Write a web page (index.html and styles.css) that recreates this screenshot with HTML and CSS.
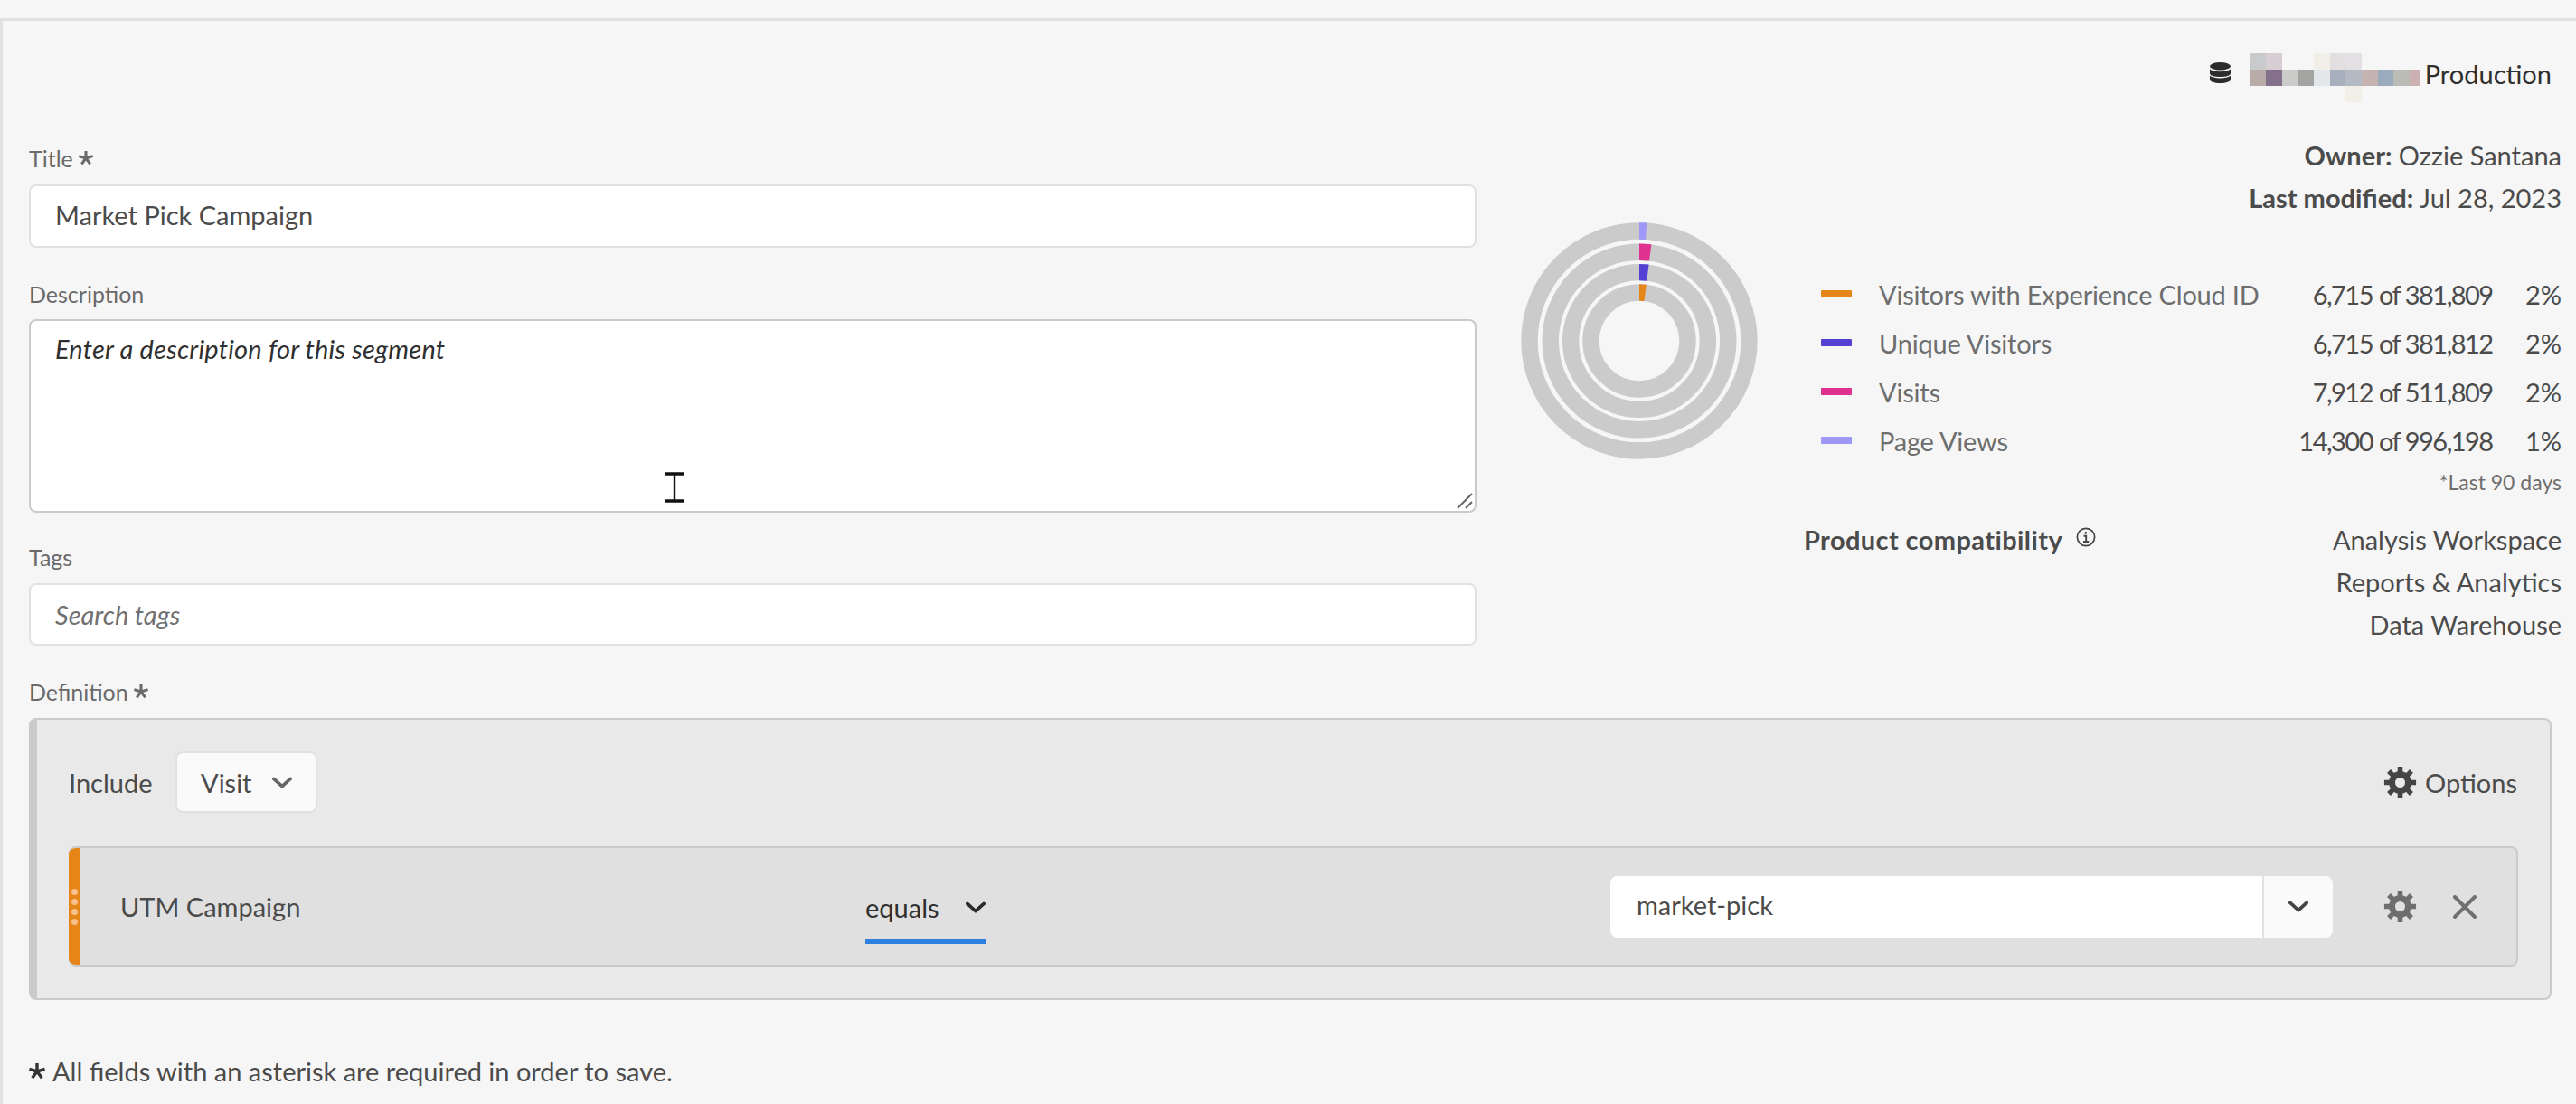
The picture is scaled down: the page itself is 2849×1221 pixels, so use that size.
FILE: index.html
```html
<!DOCTYPE html>
<html lang="en">
<head>
<meta charset="utf-8">
<title>Segment</title>
<link rel="stylesheet" href="styles.css">
</head>
<body>
<svg class="defs" width="0" height="0" aria-hidden="true">
  <symbol id="gear" viewBox="-20 -20 40 40">
    <circle r="9.7" fill="none" stroke="currentColor" stroke-width="7.4"/>
    <path fill="none" stroke="currentColor" stroke-width="6" d="M0-19V-12M0 12V19M-19 0H-12M12 0H19M-13.5-13.5L-8.5-8.5M13.5 13.5L8.5 8.5M-13.5 13.5L-8.5 8.5M13.5-13.5L8.5-8.5"/>
  </symbol>
  <symbol id="chev" viewBox="0 0 24 14">
    <path fill="none" stroke="currentColor" stroke-width="4" stroke-linecap="round" stroke-linejoin="round" d="M2 2.5l10 9 10-9"/>
  </symbol>
  <symbol id="star" viewBox="-10 -10 20 20">
    <path fill="none" stroke="currentColor" stroke-width="3.8" d="M0 0V-10M0 0L9.5-3M0 0L5.9 8.1M0 0L-5.9 8.1M0 0L-9.5-3"/>
  </symbol>
</svg>

<main class="panel">
  <header class="env">
    <svg class="db-icon" viewBox="0 0 23 23"><ellipse cx="11.5" cy="4.3" rx="11.5" ry="4.3"/><path d="M0 7.6c2.5 2 7 2.6 11.5 2.6s9-.6 11.5-2.6v4.6c0 2.2-5 3.8-11.5 3.8S0 14.4 0 12.2z"/><path d="M0 14.8c2.5 2 7 2.6 11.5 2.6s9-.6 11.5-2.6V19c0 2.2-5 4-11.5 4S0 21.2 0 19z"/></svg>
    <div class="mosaic">
      <i class="c1"></i><i class="c2"></i><i></i><i></i><i class="c3"></i><i class="c4"></i><i class="c5"></i><i></i><i></i><i></i><i></i>
      <i class="d0"></i><i class="d1"></i><i class="d2"></i><i class="d3"></i><i class="d4"></i><i class="d5"></i><i class="d6"></i><i class="d7"></i><i class="d8"></i><i class="d9"></i><i class="d10"></i>
      <i></i><i></i><i></i><i></i><i></i><i></i><i class="c3"></i><i></i><i></i><i></i><i></i>
    </div>
    <span class="env-name">Production</span>
  </header>

  <div class="top">
    <section class="form">
      <div class="field-label label-title">Title <svg class="star"><use href="#star"/></svg></div>
      <div class="input">Market Pick Campaign</div>
      <div class="field-label label-desc">Description</div>
      <div class="textarea">
        <span class="placeholder dark">Enter a description for this segment</span>
        <svg class="grip" viewBox="0 0 18 18"><path fill="none" stroke="#666" stroke-width="2" d="M1 17L17 1M10 17L17 10"/></svg>
        <svg class="ibeam" viewBox="0 0 20 34"><path fill="none" stroke="#111" stroke-width="2.4" d="M10 2V32"/><path fill="none" stroke="#111" stroke-width="3.4" d="M0 2H20M0 32H20"/></svg>
      </div>
      <div class="field-label label-tags">Tags</div>
      <div class="input input-tags"><span class="placeholder">Search tags</span></div>
    </section>

    <section class="side">
      <svg class="donut" viewBox="-132 -132 264 264">
        <g class="ring-bg">
          <circle r="121.5"/><circle r="98.3"/><circle r="75.9"/><circle r="53.5"/>
        </g>
        <g class="ring-arc" transform="rotate(-90)">
          <circle r="121.5" class="purple" pathLength="360" stroke-dasharray="3.6 356.4"/>
          <circle r="98.3" class="pink" pathLength="360" stroke-dasharray="7.2 352.8"/>
          <circle r="75.9" class="blue" pathLength="360" stroke-dasharray="7.2 352.8"/>
          <circle r="53.5" class="orange" pathLength="360" stroke-dasharray="7.2 352.8"/>
        </g>
      </svg>
      <div class="stats">
        <div class="meta"><b>Owner:</b> Ozzie Santana</div>
        <div class="meta"><b>Last modified:</b> Jul 28, 2023</div>
        <div class="legend">
          <i class="sw bg-orange"></i><span class="name">Visitors with Experience Cloud ID</span><span class="num">6,715</span><span class="of">of 381,809</span><span class="pct">2%</span>
          <i class="sw bg-blue"></i><span class="name">Unique Visitors</span><span class="num">6,715</span><span class="of">of 381,812</span><span class="pct">2%</span>
          <i class="sw bg-pink"></i><span class="name">Visits</span><span class="num">7,912</span><span class="of">of 511,809</span><span class="pct">2%</span>
          <i class="sw bg-purple"></i><span class="name">Page Views</span><span class="num">14,300</span><span class="of">of 996,198</span><span class="pct">1%</span>
        </div>
        <div class="note">*Last 90 days</div>
        <div class="compat">
          <div class="compat-title"><b>Product compatibility</b>
            <svg class="info" viewBox="0 0 22 22"><circle cx="11" cy="11" r="9.6" fill="none" stroke="#444" stroke-width="1.7"/><path fill="none" stroke="#444" stroke-width="1.9" d="M8.5 9.8h2.7v6M8 16h6.2"/><circle cx="10.8" cy="6.4" r="1.4" fill="#444"/></svg>
          </div>
          <div class="compat-list"><div>Analysis Workspace</div><div>Reports &amp; Analytics</div><div>Data Warehouse</div></div>
        </div>
      </div>
    </section>
  </div>

  <div class="field-label label-def">Definition <svg class="star"><use href="#star"/></svg></div>
  <section class="def">
    <div class="def-head">
      <span class="include">Include</span>
      <div class="visit"><span>Visit</span><svg class="chev grey"><use href="#chev"/></svg></div>
      <div class="options"><svg class="gear"><use href="#gear"/></svg><span>Options</span></div>
    </div>
    <div class="rule">
      <div class="handle"><i></i><i></i><i></i><i></i></div>
      <div class="dim">UTM Campaign</div>
      <div class="op"><span>equals</span><svg class="chev dark"><use href="#chev"/></svg></div>
      <div class="combo"><div class="combo-text">market-pick</div><div class="combo-btn"><svg class="chev mid"><use href="#chev"/></svg></div></div>
      <svg class="gear small"><use href="#gear"/></svg>
      <svg class="close" viewBox="0 0 26 26"><path fill="none" stroke="currentColor" stroke-width="4" stroke-linecap="round" d="M2 2L24 24M24 2L2 24"/></svg>
    </div>
  </section>

  <footer class="req"><svg class="star big"><use href="#star"/></svg> All fields with an asterisk are required in order to save.</footer>
</main>
</body>
</html>
```

FILE: styles.css
```css
* { box-sizing: border-box; }
html, body { margin: 0; height: 1221px; overflow: hidden; }
body {
  background: #f6f6f6;
  color: #4b4b4b;
  font-family: "Lato", "Open Sans", sans-serif;
  font-size: 29px;
  padding-top: 20px;
}
.defs { position: absolute; }
b { font-weight: 700; }
.panel {
  height: 1201px;
  border-top: 3px solid #e1e1e1;
  border-left: 3px solid #e1e1e1;
  padding-left: 29px;
  padding-right: 16px;
}

/* header */
.env {
  height: 137px;
  padding-top: 36px;
  display: flex;
  align-items: flex-start;
  justify-content: flex-end;
  padding-right: 11px;
}
.db-icon { width: 23px; height: 23px; margin-top: 10px; margin-right: 22px; fill: #2c2c2c; }
.mosaic { display: grid; grid-template-columns: repeat(10, 17.6px) 12px; grid-auto-rows: 18px; margin-right: 5px; }
.env-name { color: #2f2f2f; line-height: 46px; }
.c1 { background: #c9cacb; } .c2 { background: #d6ced2; } .c3 { background: #f2efe9; }
.c4 { background: #e3dfe0; } .c5 { background: #e2e0e3; }
.d0 { background: #b9aba8; } .d1 { background: #84708a; } .d2 { background: #cbcbc9; }
.d3 { background: #a3a3a1; } .d4 { background: #e4e7ea; } .d5 { background: #a9b0bd; }
.d6 { background: #b3bac3; } .d7 { background: #c4b3b1; } .d8 { background: #9aabbd; }
.d9 { background: #bcbcb6; } .d10 { background: #cbb1b2; }

.top { display: grid; grid-template-columns: 1601px 1200px; height: 590px; }

/* form */
.field-label { color: #6a6a6a; font-size: 25px; height: 30px; line-height: 30px; display: flex; align-items: center; gap: 6px; }
.star { width: 16px; height: 16px; color: #6a6a6a; }
.label-desc { margin-top: 36px; margin-bottom: 13px; }
.label-title { margin-bottom: 14px; }
.label-tags { margin-top: 34px; margin-bottom: 14px; }
.input {
  height: 70px;
  background: #fff;
  border: 2px solid #e1e1e1;
  border-radius: 8px;
  padding: 0 27px;
  line-height: 64px;
}
.input-tags { height: 69px; line-height: 66px; }
.textarea {
  position: relative;
  height: 214px;
  background: #fff;
  border: 2px solid #cacaca;
  border-radius: 8px;
  padding: 13px 27px;
  line-height: 36px;
}
.placeholder { font-style: italic; color: #707070; }
.placeholder.dark { color: #2f2f2f; letter-spacing: .2px; }
.grip { position: absolute; right: 2px; bottom: 2px; width: 18px; height: 18px; }
.ibeam { position: absolute; left: 702px; top: 167px; width: 20px; height: 34px; }

/* side */
.side { display: grid; grid-template-columns: 362px 838px; }
.donut { width: 264px; height: 264px; margin-left: 48px; margin-top: 85px; }
.ring-bg circle { fill: none; stroke: #cbcbcb; stroke-width: 18.4; }
.ring-arc circle { fill: none; stroke-width: 18.4; }
.purple { stroke: #9d97f8; } .pink { stroke: #de3190; } .blue { stroke: #5440d3; } .orange { stroke: #e68619; }
.bg-purple { background: #9d97f8; } .bg-pink { background: #de3190; } .bg-blue { background: #5440d3; } .bg-orange { background: #e68619; }
.meta { text-align: right; height: 47px; line-height: 47px; }
.stats { margin-top: -12px; }
.legend {
  margin-top: 56px;
  display: grid;
  grid-template-columns: 34px 1fr 100px 140px 62px;
  grid-auto-rows: 54px;
  align-items: center;
  padding-left: 19px;
}
.sw { height: 8px; border-radius: 1px; }
.name { color: #6e6e6e; padding-left: 30px; white-space: nowrap; letter-spacing: -.2px; }
.num { text-align: right; padding-right: 7px; letter-spacing: -1.5px; white-space: nowrap; }
.of { letter-spacing: -1.5px; white-space: nowrap; }
.pct { text-align: right; }
.note { text-align: right; font-size: 23px; color: #6e6e6e; line-height: 32px; margin-top: 3px; }
.compat { display: flex; justify-content: space-between; margin-top: 24px; }
.compat-title { display: flex; align-items: flex-start; gap: 15px; line-height: 47px; letter-spacing: .4px; }
.info { width: 22px; height: 22px; margin-top: 10px; }
.compat-list { text-align: right; line-height: 47px; }

/* definition */
.label-def { margin-top: 0; margin-bottom: 14px; }
.def {
  width: 2790px;
  height: 312px;
  background: #e9e9e9;
  border: 2px solid #cacaca;
  border-left-width: 9px;
  border-radius: 8px;
  padding: 35px 36px 0 35px;
}
.def-head { display: flex; align-items: center; height: 68px; }
.include { width: 118px; }
.visit {
  width: 157px; height: 68px;
  background: #fafafa;
  border: 2px solid #e1e1e1;
  border-radius: 8px;
  padding: 0 26px;
  display: flex; align-items: center; justify-content: space-between;
}
.chev { width: 22px; height: 13px; }
.chev.grey { color: #666; }
.chev.dark { color: #2c2c2c; }
.chev.mid { color: #444; }
.options { margin-left: auto; display: flex; align-items: center; gap: 9px; }
.gear { width: 37px; height: 37px; color: #454545; }
.gear.small { color: #6e6e6e; margin-left: 56px; }
.close { width: 26px; height: 26px; color: #707070; margin-left: 40px; }
.rule {
  margin-top: 37px;
  width: 2709px;
  height: 133px;
  background: #e0e0e0;
  border: 2px solid #cacaca;
  border-left: 0;
  border-radius: 8px;
  display: flex;
  align-items: center;
  overflow: hidden;
}
.handle {
  width: 12px; height: 100%;
  background: #e68619;
  display: flex; flex-direction: column; justify-content: center; gap: 4px;
  align-items: center;
}
.handle i { width: 7px; height: 7px; border-radius: 50%; background: #f7c08c; }
.dim { width: 869px; padding-left: 45px; }
.op {
  width: 133px; height: 82px;
  margin-top: 1px;
  border-bottom: 5px solid #2d7fe0;
  display: flex; align-items: center; justify-content: space-between;
  color: #2f2f2f;
  padding-top: 5px;
}
.combo { width: 799px; height: 68px; margin-left: 691px; display: flex; border-radius: 8px; overflow: hidden; }
.combo-text { flex: 1; background: #fff; padding-left: 29px; line-height: 64px; }
.combo-btn { width: 78px; background: #fafafa; border-left: 2px solid #e1e1e1; display: flex; align-items: center; justify-content: center; }

.req { margin-top: 61px; display: flex; align-items: center; gap: 8px; }
.star.big { width: 18px; height: 18px; color: #333; }
```
